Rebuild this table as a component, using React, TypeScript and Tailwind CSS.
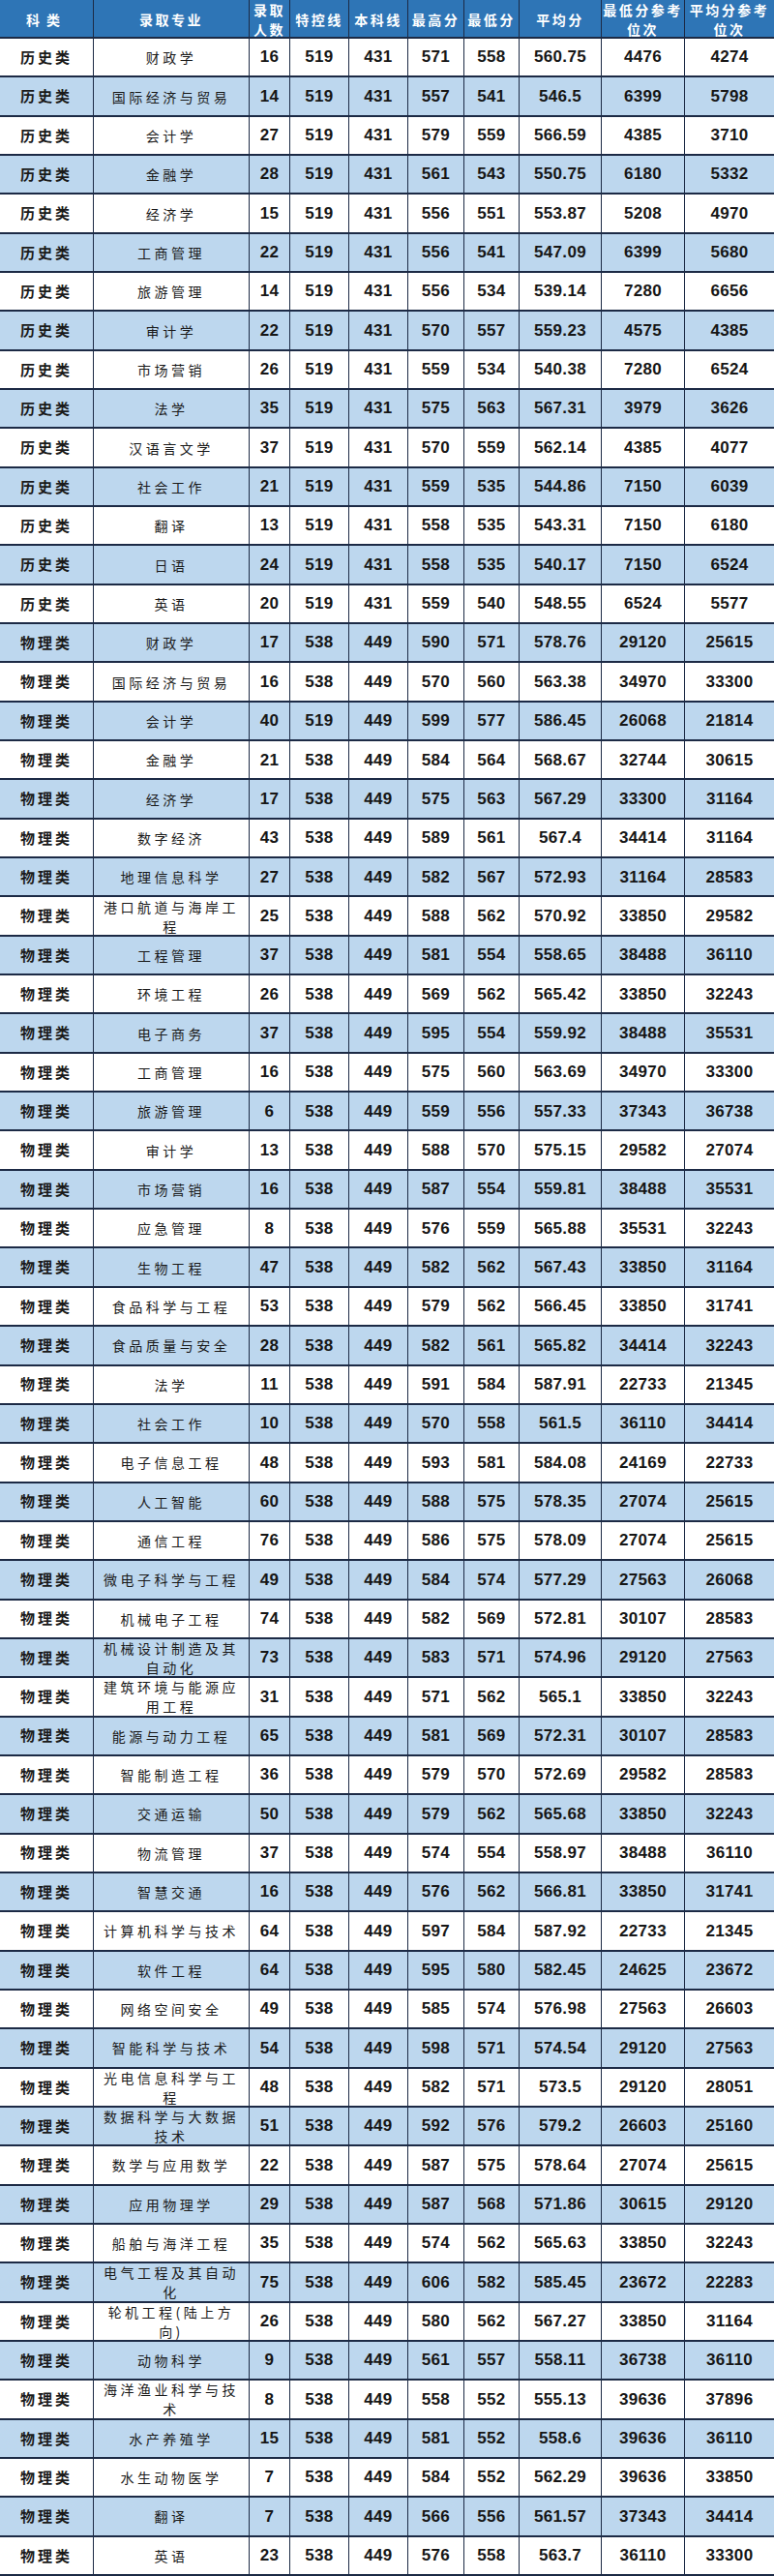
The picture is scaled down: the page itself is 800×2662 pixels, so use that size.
import React from "react";

type Row = [string, string, number, number, number, number, number, string, number, number];

const H = "历史类";
const P = "物理类";

const rows: Row[] = [
  [H, "财政学", 16, 519, 431, 571, 558, "560.75", 4476, 4274],
  [H, "国际经济与贸易", 14, 519, 431, 557, 541, "546.5", 6399, 5798],
  [H, "会计学", 27, 519, 431, 579, 559, "566.59", 4385, 3710],
  [H, "金融学", 28, 519, 431, 561, 543, "550.75", 6180, 5332],
  [H, "经济学", 15, 519, 431, 556, 551, "553.87", 5208, 4970],
  [H, "工商管理", 22, 519, 431, 556, 541, "547.09", 6399, 5680],
  [H, "旅游管理", 14, 519, 431, 556, 534, "539.14", 7280, 6656],
  [H, "审计学", 22, 519, 431, 570, 557, "559.23", 4575, 4385],
  [H, "市场营销", 26, 519, 431, 559, 534, "540.38", 7280, 6524],
  [H, "法学", 35, 519, 431, 575, 563, "567.31", 3979, 3626],
  [H, "汉语言文学", 37, 519, 431, 570, 559, "562.14", 4385, 4077],
  [H, "社会工作", 21, 519, 431, 559, 535, "544.86", 7150, 6039],
  [H, "翻译", 13, 519, 431, 558, 535, "543.31", 7150, 6180],
  [H, "日语", 24, 519, 431, 558, 535, "540.17", 7150, 6524],
  [H, "英语", 20, 519, 431, 559, 540, "548.55", 6524, 5577],
  [P, "财政学", 17, 538, 449, 590, 571, "578.76", 29120, 25615],
  [P, "国际经济与贸易", 16, 538, 449, 570, 560, "563.38", 34970, 33300],
  [P, "会计学", 40, 519, 449, 599, 577, "586.45", 26068, 21814],
  [P, "金融学", 21, 538, 449, 584, 564, "568.67", 32744, 30615],
  [P, "经济学", 17, 538, 449, 575, 563, "567.29", 33300, 31164],
  [P, "数字经济", 43, 538, 449, 589, 561, "567.4", 34414, 31164],
  [P, "地理信息科学", 27, 538, 449, 582, 567, "572.93", 31164, 28583],
  [P, "港口航道与海岸工程", 25, 538, 449, 588, 562, "570.92", 33850, 29582],
  [P, "工程管理", 37, 538, 449, 581, 554, "558.65", 38488, 36110],
  [P, "环境工程", 26, 538, 449, 569, 562, "565.42", 33850, 32243],
  [P, "电子商务", 37, 538, 449, 595, 554, "559.92", 38488, 35531],
  [P, "工商管理", 16, 538, 449, 575, 560, "563.69", 34970, 33300],
  [P, "旅游管理", 6, 538, 449, 559, 556, "557.33", 37343, 36738],
  [P, "审计学", 13, 538, 449, 588, 570, "575.15", 29582, 27074],
  [P, "市场营销", 16, 538, 449, 587, 554, "559.81", 38488, 35531],
  [P, "应急管理", 8, 538, 449, 576, 559, "565.88", 35531, 32243],
  [P, "生物工程", 47, 538, 449, 582, 562, "567.43", 33850, 31164],
  [P, "食品科学与工程", 53, 538, 449, 579, 562, "566.45", 33850, 31741],
  [P, "食品质量与安全", 28, 538, 449, 582, 561, "565.82", 34414, 32243],
  [P, "法学", 11, 538, 449, 591, 584, "587.91", 22733, 21345],
  [P, "社会工作", 10, 538, 449, 570, 558, "561.5", 36110, 34414],
  [P, "电子信息工程", 48, 538, 449, 593, 581, "584.08", 24169, 22733],
  [P, "人工智能", 60, 538, 449, 588, 575, "578.35", 27074, 25615],
  [P, "通信工程", 76, 538, 449, 586, 575, "578.09", 27074, 25615],
  [P, "微电子科学与工程", 49, 538, 449, 584, 574, "577.29", 27563, 26068],
  [P, "机械电子工程", 74, 538, 449, 582, 569, "572.81", 30107, 28583],
  [P, "机械设计制造及其自动化", 73, 538, 449, 583, 571, "574.96", 29120, 27563],
  [P, "建筑环境与能源应用工程", 31, 538, 449, 571, 562, "565.1", 33850, 32243],
  [P, "能源与动力工程", 65, 538, 449, 581, 569, "572.31", 30107, 28583],
  [P, "智能制造工程", 36, 538, 449, 579, 570, "572.69", 29582, 28583],
  [P, "交通运输", 50, 538, 449, 579, 562, "565.68", 33850, 32243],
  [P, "物流管理", 37, 538, 449, 574, 554, "558.97", 38488, 36110],
  [P, "智慧交通", 16, 538, 449, 576, 562, "566.81", 33850, 31741],
  [P, "计算机科学与技术", 64, 538, 449, 597, 584, "587.92", 22733, 21345],
  [P, "软件工程", 64, 538, 449, 595, 580, "582.45", 24625, 23672],
  [P, "网络空间安全", 49, 538, 449, 585, 574, "576.98", 27563, 26603],
  [P, "智能科学与技术", 54, 538, 449, 598, 571, "574.54", 29120, 27563],
  [P, "光电信息科学与工程", 48, 538, 449, 582, 571, "573.5", 29120, 28051],
  [P, "数据科学与大数据技术", 51, 538, 449, 592, 576, "579.2", 26603, 25160],
  [P, "数学与应用数学", 22, 538, 449, 587, 575, "578.64", 27074, 25615],
  [P, "应用物理学", 29, 538, 449, 587, 568, "571.86", 30615, 29120],
  [P, "船舶与海洋工程", 35, 538, 449, 574, 562, "565.63", 33850, 32243],
  [P, "电气工程及其自动化", 75, 538, 449, 606, 582, "585.45", 23672, 22283],
  [P, "轮机工程(陆上方向)", 26, 538, 449, 580, 562, "567.27", 33850, 31164],
  [P, "动物科学", 9, 538, 449, 561, 557, "558.11", 36738, 36110],
  [P, "海洋渔业科学与技术", 8, 538, 449, 558, 552, "555.13", 39636, 37896],
  [P, "水产养殖学", 15, 538, 449, 581, 552, "558.6", 39636, 36110],
  [P, "水生动物医学", 7, 538, 449, 584, 552, "562.29", 39636, 33850],
  [P, "翻译", 7, 538, 449, 566, 556, "561.57", 37343, 34414],
  [P, "英语", 23, 538, 449, 576, 558, "563.7", 36110, 33300],
];

const headers: React.ReactNode[] = [
  <span className="tracking-[7px]">科类</span>,
  "录取专业",
  <>录取<br />人数</>,
  "特控线",
  "本科线",
  "最高分",
  "最低分",
  "平均分",
  <>最低分参考<br />位次</>,
  <>平均分参考<br />位次</>,
];

const cell = "flex items-center justify-center text-center border-b-2 border-[#1c2a45]";

export default function App() {
  return (
    <div className="w-[800px] h-[2662px] bg-white">
      <div className="grid h-full grid-cols-[97px_161px_42px_61px_61px_58px_57px_85px_86px_92px] grid-rows-[40px_repeat(65,minmax(0,1fr))] font-['Noto_Sans_CJK_SC',sans-serif]">
        {headers.map((h, i) => (
          <div
            key={i}
            className={`${cell} ${i < 9 ? "border-r" : ""} bg-[#2e75b6] text-white text-[14px] font-bold leading-[20px] tracking-[2.5px] pt-px`}
          >
            <div>{h}</div>
          </div>
        ))}
        {rows.map((r, ri) => {
          const bg = ri % 2 === 0 ? "bg-white" : "bg-[#bdd7ee]";
          return (
            <React.Fragment key={ri}>
              <div className={`${cell} ${bg} border-r text-[15px] font-bold tracking-[3px] text-[#1a1a1a]`}>
                {r[0]}
              </div>
              <div className={`${cell} ${bg} border-r px-[4px] text-[14px] leading-[20px] tracking-[3.5px] text-[#1a1a1a]`}>
                <div>{r[1]}</div>
              </div>
              {r.slice(2).map((v, ci) => (
                <div
                  key={ci}
                  className={`${cell} ${bg} ${ci < 7 ? "border-r" : ""} font-['Liberation_Sans',sans-serif] text-[17px] font-bold tracking-[0.3px] text-[#161616]`}
                >
                  {v}
                </div>
              ))}
            </React.Fragment>
          );
        })}
      </div>
    </div>
  );
}
